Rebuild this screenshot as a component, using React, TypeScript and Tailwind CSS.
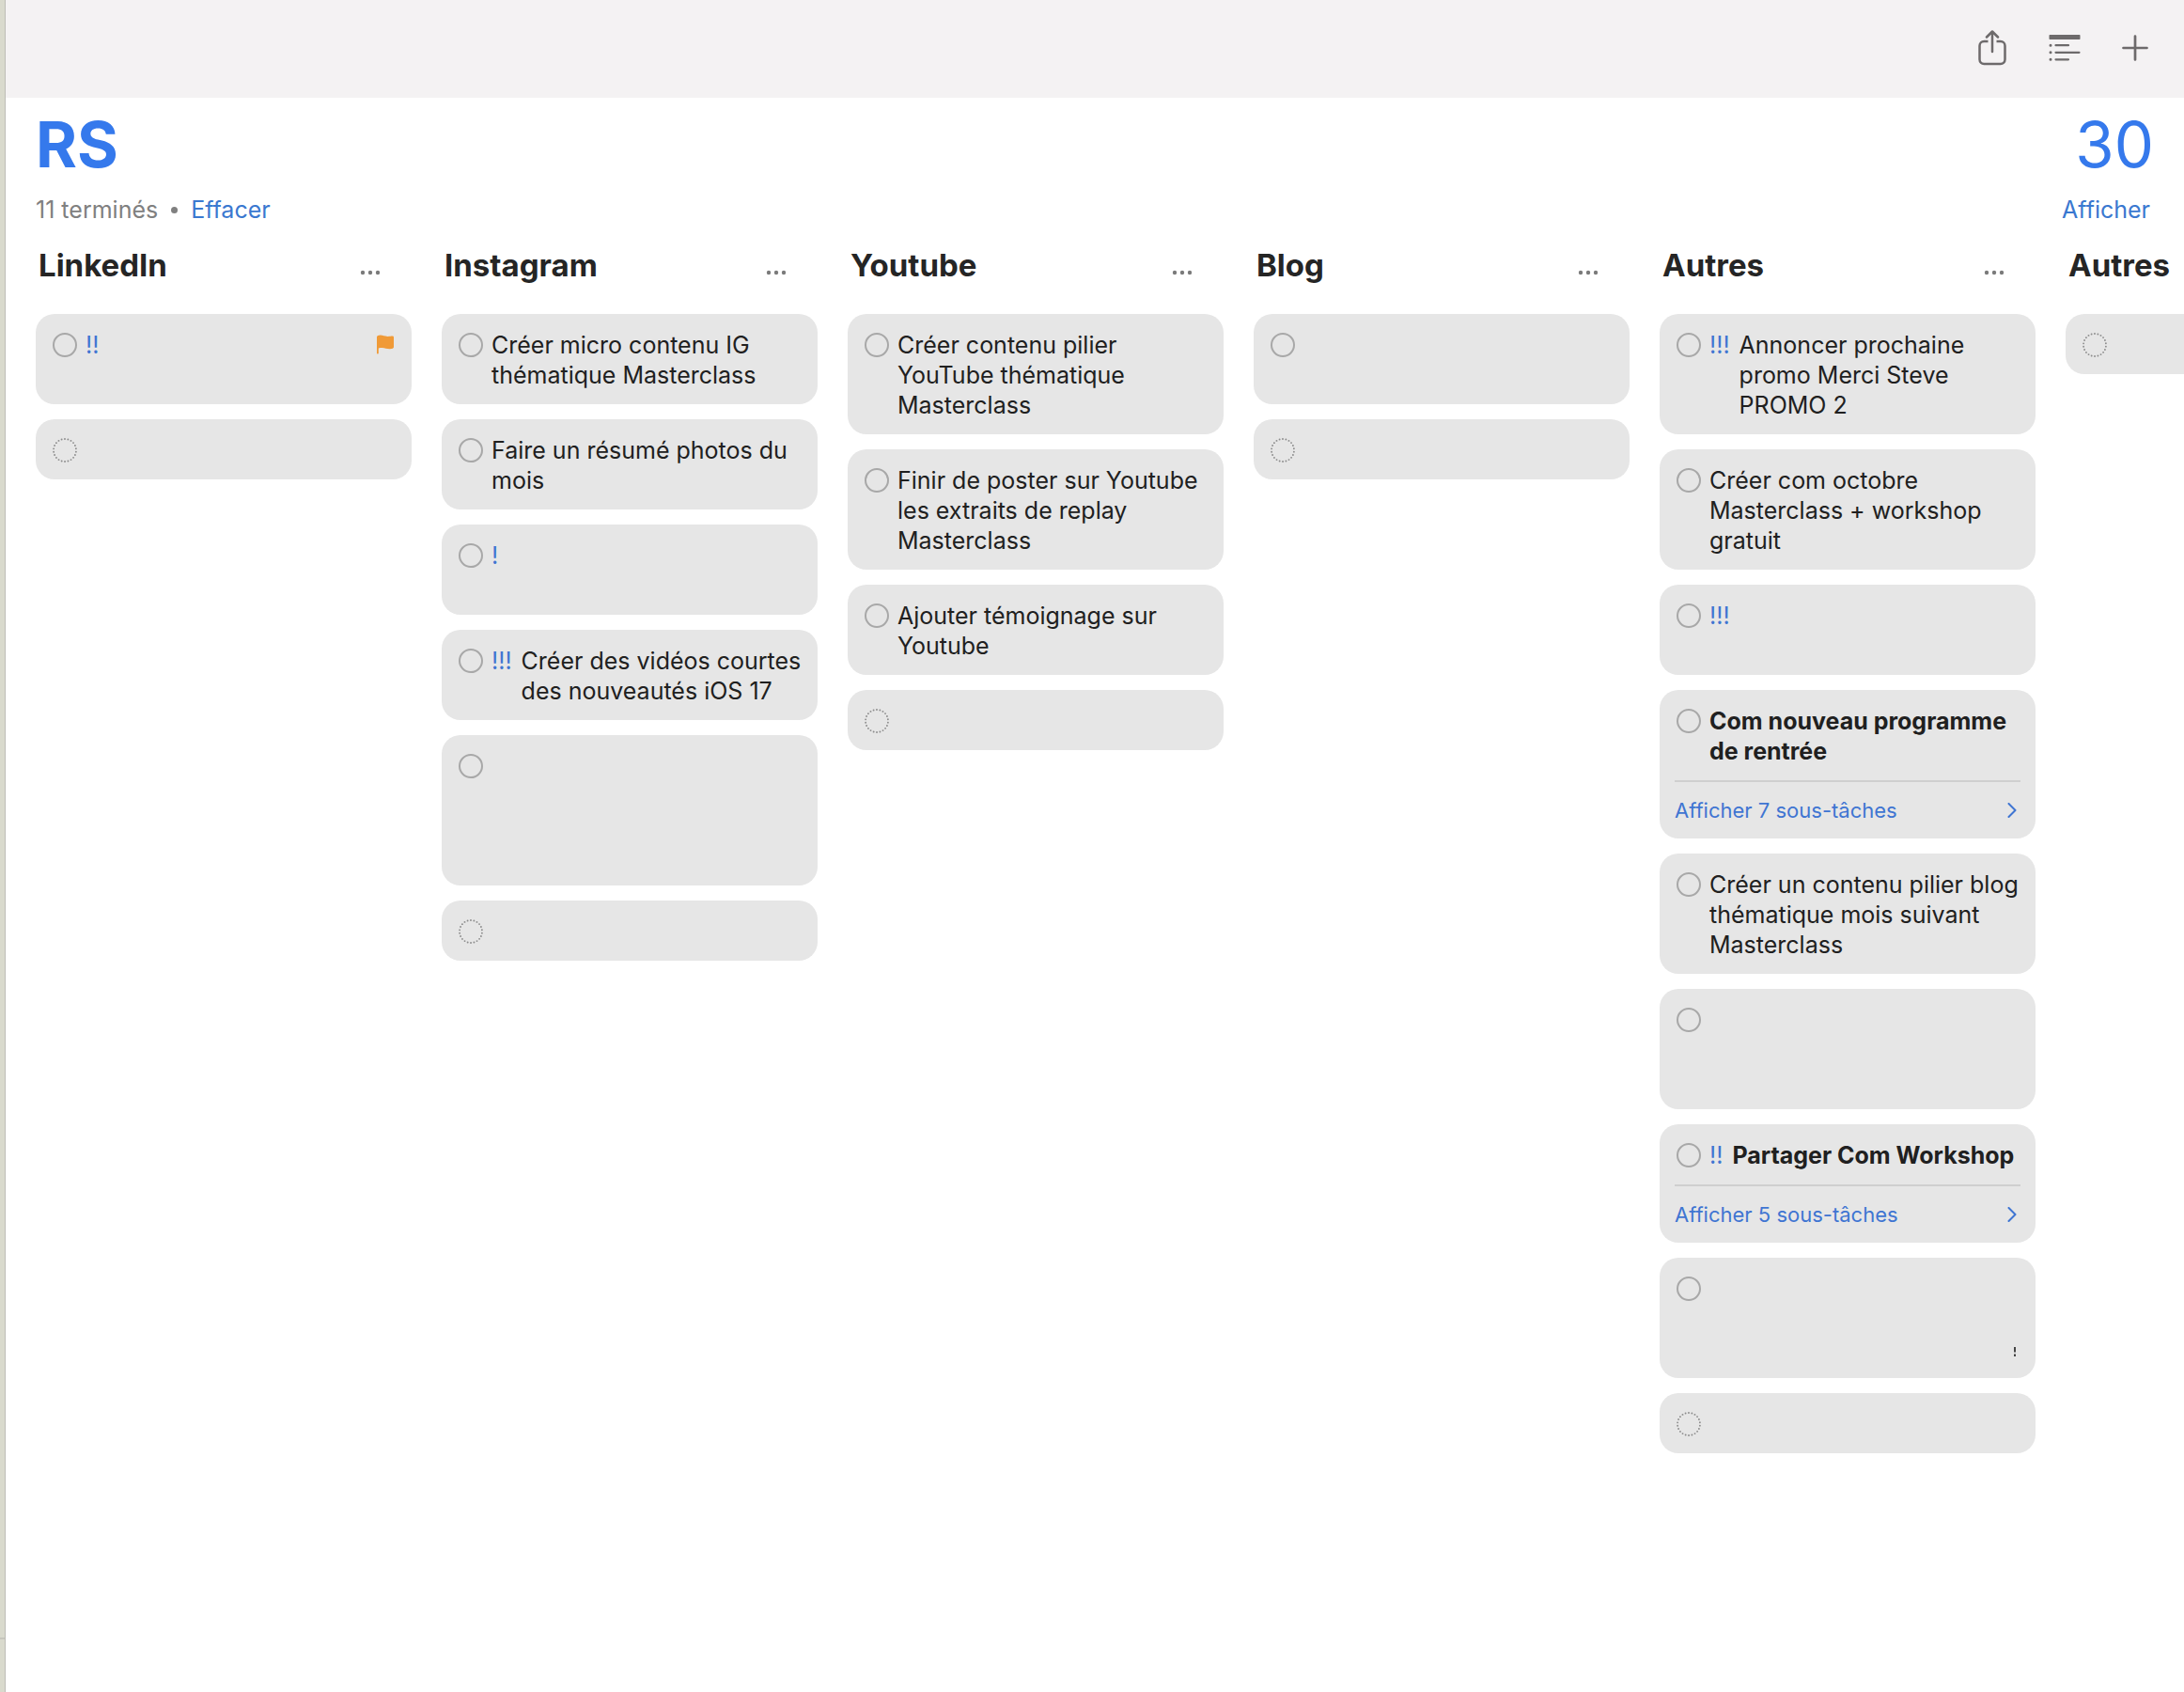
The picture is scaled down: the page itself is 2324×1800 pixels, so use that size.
import React from "react";

type Task = {
  title?: string;
  priority?: string;
  flagged?: boolean;
  bold?: boolean;
  lines?: number;
  subtasks?: number;
  mark?: boolean;
};

type Column = { name: string; tasks: Task[] };

const columns: Column[] = [
  { name: "LinkedIn", tasks: [{ priority: "!!", flagged: true, lines: 2 }] },
  {
    name: "Instagram",
    tasks: [
      { title: "Créer micro contenu IG thématique Masterclass" },
      { title: "Faire un résumé photos du mois" },
      { priority: "!", lines: 2 },
      { priority: "!!!", title: "Créer des vidéos courtes des nouveautés iOS 17" },
      { lines: 4 },
    ],
  },
  {
    name: "Youtube",
    tasks: [
      { title: "Créer contenu pilier YouTube thématique Masterclass" },
      { title: "Finir de poster sur Youtube les extraits de replay Masterclass" },
      { title: "Ajouter témoignage sur Youtube" },
    ],
  },
  { name: "Blog", tasks: [{ lines: 2 }] },
  {
    name: "Autres",
    tasks: [
      { priority: "!!!", title: "Annoncer prochaine promo Merci Steve PROMO 2" },
      { title: "Créer com octobre Masterclass + workshop gratuit" },
      { priority: "!!!", lines: 2 },
      { title: "Com nouveau programme de rentrée", bold: true, subtasks: 7 },
      { title: "Créer un contenu pilier blog thématique mois suivant Masterclass" },
      { lines: 3 },
      { priority: "!!", title: "Partager Com Workshop", bold: true, subtasks: 5 },
      { lines: 3, mark: true },
    ],
  },
  { name: "Autres", tasks: [] },
];

const minHeights: Record<number, string> = {
  1: "min-h-8",
  2: "min-h-16",
  3: "min-h-24",
  4: "min-h-32",
};

function FlagIcon() {
  return (
    <svg width="20" height="22" viewBox="0 0 20 22" className="mt-[5px] shrink-0" aria-label="Marqué">
      <path
        d="M1 2.6C1 1.4 2.6.6 4.6.6c3 0 4.600 1.300 8 1.300 2 0 3.400-.4 4.800-.4 1 0 1.600.5 1.600 1.400v10.400c0 1.300-1.600 2-4.200 2-3.300 0-5.200-1.300-8.200-1.300-1.600 0-2.800.2-3.800.4v5.200c0 .6-.4 1-.9 1S1 20.200 1 19.600z"
        fill="#f09a37"
      />
    </svg>
  );
}

function Card({ task }: { task: Task }) {
  return (
    <li className="rounded-[20px] bg-[#e6e6e6] text-[25px] leading-8 text-[#202020]">
      <div className="flex px-[18px] pt-[17px] pb-[15px]">
        <input
          type="checkbox"
          aria-label={task.title ?? "Tâche"}
          className="mt-[3px] mr-[9px] size-[26px] shrink-0 appearance-none rounded-full border-2 border-[#a8a8a8] checked:bg-[#3579ec]"
        />
        {task.priority && <span className="mr-[10px] shrink-0 text-[#3f75d2]">{task.priority}</span>}
        <div className={`flex min-w-0 flex-1 flex-col ${minHeights[task.lines ?? 1]}`}>
          {task.title && <p className={task.bold ? "-mr-3 font-bold" : "-mr-3"}>{task.title}</p>}
          {task.mark && (
            <svg width="4" height="10" viewBox="0 0 4 10" className="mt-auto mr-[2px] mb-[8px] ml-auto" aria-hidden="true">
              <path d="M2 0v5.500M2 7.500v2.500" stroke="#111" strokeWidth="1.500" />
            </svg>
          )}
        </div>
        {task.flagged && <FlagIcon />}
      </div>
      {task.subtasks && (
        <div className="px-4">
          <button className="flex w-full items-center justify-between border-t-2 border-[#cfcfcf] pt-[15px] pr-1 pb-[15px] text-[22px] leading-[30px] text-[#3f75d2]">
            Afficher {task.subtasks} sous-tâches
            <svg width="10" height="16" viewBox="0 0 10 16" fill="none" aria-hidden="true">
              <path d="M1.500 1l7 7-7 7" stroke="#3f75d2" strokeWidth="2" strokeLinecap="round" strokeLinejoin="round" />
            </svg>
          </button>
        </div>
      )}
    </li>
  );
}

function NewTask() {
  return (
    <li className="flex rounded-[20px] bg-[#e6e6e6] pt-5 pb-[18px] pl-[18px]">
      <button aria-label="Nouvelle tâche" className="size-[26px]">
        <svg width="26" height="26" viewBox="0 0 26 26" aria-hidden="true" fill="#8c8c8c">
          {Array.from({ length: 22 }, (_, i) => {
            const angle = (i * 2 * Math.PI) / 22 + 0.14;
            return <circle key={i} cx={13 + 12 * Math.cos(angle)} cy={13 + 12 * Math.sin(angle)} r="0.950" />;
          })}
        </svg>
      </button>
    </li>
  );
}

export default function App() {
  return (
    <div className="flex min-h-screen overflow-hidden bg-white font-['Inter',sans-serif]">
      <div className="flex w-[6px] shrink-0 flex-col border-r border-[#bdbdb6] bg-[#d9dacd]">
        <div className="flex-1" />
        <div className="h-[58px] border-t-2 border-[#c6c6bd]" />
      </div>
      <div className="min-w-0 flex-1">
        <header className="flex h-[104px] items-center justify-end bg-[#f4f2f3] pr-[38px] pb-[3px]">
          <button aria-label="Partager" className="mr-[45px]">
            <svg width="30" height="38" viewBox="0 0 30 38" fill="none" stroke="#6d6a6b" strokeWidth="2.500" strokeLinecap="round" strokeLinejoin="round">
              <path d="M10.500 12H6.200A4.700 4.700 0 0 0 1.500 16.700v14.600A4.700 4.700 0 0 0 6.200 36h17.600a4.700 4.700 0 0 0 4.700-4.700V16.700A4.700 4.700 0 0 0 23.800 12h-4.300" strokeLinecap="butt" />
              <path d="M15 23V1.800M9 7.500l6-6 6 6" />
            </svg>
          </button>
          <button aria-label="Présentation" className="mr-11">
            <svg width="34" height="28" viewBox="0 0 34 28" fill="none" stroke="#6d6a6b" strokeWidth="2.200" strokeLinecap="round">
              <rect x="0.500" y="0" width="33" height="5" rx="0.800" fill="#6d6a6b" stroke="none" />
              <path d="M7.500 11.200h13.500M7.500 18.800h25M7.500 26.300h13.500" />
              <path d="M2 11.200h.01M2 18.800h.01M2 26.300h.01" strokeWidth="3" />
            </svg>
          </button>
          <button aria-label="Ajouter">
            <svg width="28" height="28" viewBox="0 0 28 28" fill="none" stroke="#6d6a6b" strokeWidth="2.700" strokeLinecap="round">
              <path d="M14 1.500v25M1.500 14h25" />
            </svg>
          </button>
        </header>
        <main className="pl-8">
          <div className="flex justify-between pt-[10px] pr-8 text-[67px] leading-20 text-[#3579ec]">
            <h1 className="font-bold">RS</h1>
            <span>30</span>
          </div>
          <div className="flex justify-between pt-[13px] pr-9 text-[25px] leading-8 text-[#808080]">
            <p className="flex items-center gap-[14px]">
              11 terminés
              <span className="size-[7px] rounded-full bg-[#808080]" />
              <button className="text-[#3a78d0]">Effacer</button>
            </p>
            <button className="text-[#3a78d0]">Afficher</button>
          </div>
          <div className="flex gap-8 pt-[19px]">
            {columns.map((column, i) => (
              <section key={i} className="w-[400px] shrink-0">
                <div className="flex h-[76px] items-start justify-between pr-[33px] pl-[3px]">
                  <h2 className="text-[33px] leading-[48px] font-bold text-[#252525]">{column.name}</h2>
                  <button aria-label={`Options de ${column.name}`} className="mt-[29px]">
                    <svg width="22" height="6" viewBox="0 0 22 6" fill="#7b7b7b" className="block">
                      <circle cx="3" cy="3" r="2.200" />
                      <circle cx="11" cy="3" r="2.200" />
                      <circle cx="19" cy="3" r="2.200" />
                    </svg>
                  </button>
                </div>
                <ul className="flex flex-col gap-4">
                  {column.tasks.map((task, j) => (
                    <Card key={j} task={task} />
                  ))}
                  <NewTask />
                </ul>
              </section>
            ))}
          </div>
        </main>
      </div>
    </div>
  );
}
